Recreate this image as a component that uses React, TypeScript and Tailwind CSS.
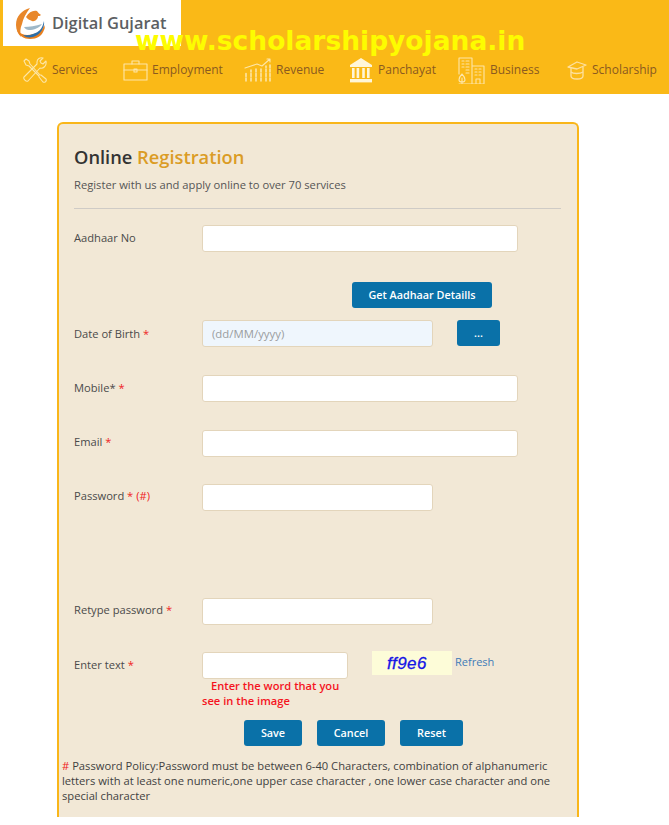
import React from "react";

const ic = { fill: "none", stroke: "#fde6a8", strokeWidth: 1.1, strokeLinecap: "round" as const, strokeLinejoin: "round" as const };

function Logo() {
  return (
    <svg width="30" height="33" viewBox="0 0 30 33">
      <path d="M15 1C7 3 1 9 1 18c0 5 2 9 5 12-1-4-1-9 1-13 1-5 4-11 8-16z" fill="#e8872a" />
      <path d="M2 23c2 6 7 9 13 9 7 0 12-3 14-9 1-2 1-3 0-5-1 5-5 8-11 9-6 2-12 1-16-4z" fill="#e87f1e" />
      <path d="M29 14c1 7-4 14-11 16-5 1-8 0-10-2 6 1 13-1 17-5 2-2 3-5 4-9z" fill="#2d6ea8" />
      <path d="M11 10c3-5 7-7 11-6 1 2 3 3 4 4-1 1-2 1-3 1 0 3-3 6-6 5-2-1-5-2-6-4z" fill="#e8872a" />
      <path d="M9 20c5 0 12-1 18-3-3 4-8 6-13 6-2 0-4-1-5-3z" fill="#9fb8c8" />
    </svg>
  );
}

function ServicesIcon() {
  return (
    <svg width="26" height="26" viewBox="0 0 26 26" {...ic}>
      <path d="M2 4l2-2 3 2 1 3 10 11 1 0 5 4c1 2-1 4-3 3l-4-5 0-1L7 9 4 8z" />
      <path d="M24 4l-3 3-2-1-1-2 3-3c-3-1-6 1-6 4l0 2L2 20c-1 2 2 5 4 4L18 11c3 1 7-2 6-7z" />
    </svg>
  );
}
function EmploymentIcon() {
  return (
    <svg width="25" height="21" viewBox="0 0 25 21" {...ic}>
      <rect x="1" y="4" width="23" height="16" />
      <path d="M9 4V1h7v3M1 10h23M11 9h3v3h-3z" />
    </svg>
  );
}
function RevenueIcon() {
  return (
    <svg width="28" height="24" viewBox="0 0 28 24" {...ic}>
      <path d="M1 10l6-2 6-2 5 2 8-7M23 1h3v3" />
      <path strokeDasharray="3 1.5" strokeWidth="1.6" d="M2 23v-9M7 23v-11M12 23v-13M17 23v-12M22 23v-15M26 23v-16" />
    </svg>
  );
}
function PanchayatIcon() {
  return (
    <svg width="24" height="25" viewBox="0 0 24 25">
      <path d="M12 0L23 7v2H1V7z" fill="#fff6d8" />
      <rect x="3" y="10" width="2.6" height="10" fill="#fff6d8" />
      <rect x="7.6" y="10" width="2.6" height="10" fill="#fff6d8" />
      <rect x="13.2" y="10" width="2.6" height="10" fill="#fff6d8" />
      <rect x="18" y="10" width="2.6" height="10" fill="#fff6d8" />
      <rect x="1" y="21" width="22" height="3.4" fill="#fff6d8" />
    </svg>
  );
}
function BusinessIcon() {
  return (
    <svg width="27" height="27" viewBox="0 0 27 27" {...ic}>
      <path d="M1 17V1h13v26H7M14 9h12v18H14M1 27h25" />
      <path d="M4 4h2M8 4h3M4 7h2M8 7h3M4 10h2M8 10h3M8 13h3M8 16h3M17 12h2M21 12h2M17 15h2M21 15h2M17 18h2M21 18h2M18 27v-5h4v5" />
      <path d="M4 17c2 2 3 4 3 6 0 1-1 2-3 2s-3-1-3-2c0-2 1-4 3-6zM4 21v6" />
    </svg>
  );
}
function ScholarshipIcon() {
  return (
    <svg width="20" height="19" viewBox="0 0 20 19" fill="none" stroke="#fde0a0" strokeWidth="1.3" strokeLinejoin="round">
      <path d="M1 6l9-5 9 3-9 4z" />
      <path d="M4 7v8c0 2 3 3 6 3s6-1 6-3V6" />
      <path d="M4 11c2 2 9 2 12 0" />
    </svg>
  );
}

function NavItem({ icon, label, w, gap }: { icon: React.ReactNode; label: string; w: string; gap: string }) {
  return (
    <div className={`flex items-center ${w} ${gap}`}>
      {icon}
      <span className="text-[12px] leading-none text-[#8a5a20]">{label}</span>
    </div>
  );
}

function Label({ children, cls = "w-[128px] pb-[2px]" }: { children: React.ReactNode; cls?: string }) {
  return <label className={`${cls} shrink-0 text-[11.15px] leading-[16px] text-[#4a4a4a]`}>{children}</label>;
}
const Star = () => <span className="text-[#ef1c24]">*</span>;

function Input({ w, placeholder, bg = "bg-white" }: { w: string; placeholder?: string; bg?: string }) {
  return (
    <input
      readOnly
      placeholder={placeholder}
      className={`${w} ${bg} h-[27px] rounded-[3px] border border-[#e3d5bb] px-[9px] text-[11.4px] outline-none placeholder:text-[#9a9da0]`}
    />
  );
}
function Btn({ children, w }: { children: React.ReactNode; w: string }) {
  return (
    <button className={`${w} h-[26px] rounded-[3px] bg-[#0a71a8] text-center text-[10.8px] font-semibold leading-[26px] text-white`}>
      {children}
    </button>
  );
}

export default function App() {
  return (
    <div className="h-[825px] overflow-hidden bg-white" style={{ fontFamily: '"Open Sans", sans-serif' }}>
      <header className="relative h-[94px] bg-[#fab917]">
        <div className="ml-[3px] flex h-[46px] w-[178px] items-center bg-white pl-[12px]">
          <Logo />
          <span className="ml-[7px] text-[16.4px] font-semibold leading-none text-[#5c5f63]">Digital Gujarat</span>
        </div>
        <div className="absolute left-[135px] top-[26px] whitespace-nowrap text-[26.5px] font-bold leading-[30px] text-[#fdfc00]" style={{ fontFamily: '"DejaVu Sans", sans-serif' }}>
          www.scholarshipyojana.in
        </div>
        <nav className="flex h-[48px] items-center pl-[22px]">
          <NavItem icon={<ServicesIcon />} label="Services" w="w-[101px]" gap="gap-[4px]" />
          <NavItem icon={<EmploymentIcon />} label="Employment" w="w-[121px]" gap="gap-[4px]" />
          <NavItem icon={<RevenueIcon />} label="Revenue" w="w-[105px]" gap="gap-[4px]" />
          <NavItem icon={<PanchayatIcon />} label="Panchayat" w="w-[109px]" gap="gap-[5px]" />
          <NavItem icon={<BusinessIcon />} label="Business" w="w-[109px]" gap="gap-[5px]" />
          <NavItem icon={<ScholarshipIcon />} label="Scholarship" w="w-[100px]" gap="gap-[5px]" />
        </nav>
      </header>

      <main className="ml-[57px] mt-[28px] h-[695px] w-[522px] rounded-t-[6px] border-x-2 border-t-2 border-[#f9b61a] bg-[#f2e8d6] pl-[15px] pr-[16px] pt-[20px]">
        <h1 className="text-[18.3px] font-semibold leading-[25px] text-[#333]">
          Online <span className="text-[#db9c25]">Registration</span>
        </h1>
        <p className="mt-[8px] text-[11.2px] leading-[16px] text-[#555]">Register with us and apply online to over 70 services</p>
        <hr className="mt-[15px] border-t border-[#cfcbc6]" />

        <div className="mt-[16px] flex items-center">
          <Label>Aadhaar No</Label>
          <Input w="w-[316px]" />
        </div>
        <div className="mt-[29px] pl-[278px]">
          <Btn w="w-[140px]">Get Aadhaar Detaills</Btn>
        </div>
        <div className="mt-[12px] flex items-center">
          <Label cls="w-[128px]">Date of Birth <Star /></Label>
          <Input w="w-[231px]" placeholder="(dd/MM/yyyy)" bg="bg-[#eff6fd]" />
          <div className="ml-[24px] -mt-[2px]"><Btn w="w-[43px]">...</Btn></div>
        </div>
        <div className="mt-[28px] flex items-center">
          <Label>Mobile* <Star /></Label>
          <Input w="w-[316px]" />
        </div>
        <div className="mt-[28px] flex items-center">
          <Label cls="w-[128px] pb-[4px]">Email <Star /></Label>
          <Input w="w-[316px]" />
        </div>
        <div className="mt-[27px] flex items-center">
          <Label cls="w-[128px] pb-[4px]">Password <Star /> <span className="text-[#ef1c24]">(#)</span></Label>
          <Input w="w-[231px]" />
        </div>
        <div className="mt-[87px] flex items-center">
          <Label cls="w-[128px] pb-[4px]">Retype password <Star /></Label>
          <Input w="w-[231px]" />
        </div>
        <div className="mt-[27px] flex">
          <Label cls="w-[128px] pt-[5px]">Enter text <Star /></Label>
          <div className="w-[146px] shrink-0">
            <Input w="w-[146px]" />
            <p className="-mt-[1px] whitespace-nowrap text-[11.15px] font-semibold leading-[15px] text-[#f5141e]">
              <span className="pl-[9px]">Enter the word that you</span>
              <br />
              see in the image
            </p>
          </div>
          <div className="ml-[24px] -mt-[1px] flex h-[24px] w-[80px] items-center bg-[#fdfcd8] pl-[15px]">
            <span className="text-[17px] italic leading-none tracking-[0.4px] text-[#1414e6]" style={{ fontFamily: '"Liberation Sans", sans-serif', WebkitTextStroke: "0.3px #1414e6" }}>ff9e6</span>
          </div>
          <a className="ml-[3px] pt-[2px] text-[11px] leading-[15px] text-[#3f7cb8]">Refresh</a>
        </div>
        <div className="mt-[12px] flex gap-[15px] pl-[170px]">
          <Btn w="w-[58px]">Save</Btn>
          <Btn w="w-[68px]">Cancel</Btn>
          <Btn w="w-[63px]">Reset</Btn>
        </div>
        <p className="-ml-[12px] mt-[12px] w-[500px] text-[11.2px] leading-[15px] text-[#3f3f3f]">
          <span className="text-[#ef1c24]">#</span> Password Policy:Password must be between 6-40 Characters, combination of alphanumeric letters with at least one numeric,one upper case character , one lower case character and one special character
        </p>
      </main>
    </div>
  );
}
